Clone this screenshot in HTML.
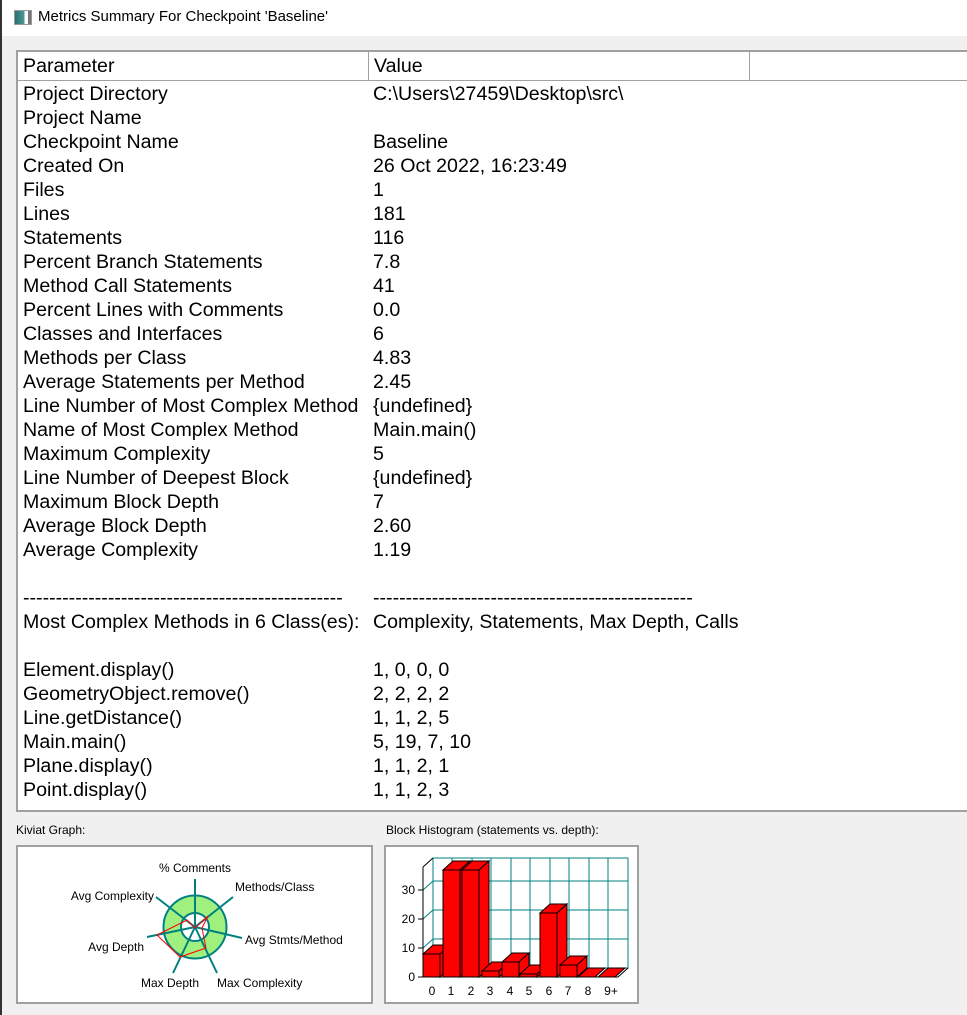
<!DOCTYPE html>
<html><head><style>
body{margin:0;width:967px;height:1015px;background:#f0f0f0;font-family:"Liberation Sans",Arial,sans-serif;position:relative;overflow:hidden}
#title{position:absolute;left:0;top:0;width:967px;height:36px;background:#fff}
#title span{position:absolute;left:38px;top:8px;font-size:15px;color:#000}
#ico{position:absolute;left:14px;top:10px;width:16px;height:13px;border:1px solid #999;background:linear-gradient(90deg,#2a6f6f 0,#4a9a9a 60%,#fff 60%,#fff 80%,#777 80%)}
#leftbar{position:absolute;left:0;top:0;width:2px;height:1015px;background:#333}
#list{position:absolute;left:16px;top:50px;width:960px;height:762px;background:#fff;border:2px solid #a0a0a0;border-right:none;box-sizing:border-box}
#hdr{position:absolute;left:0;top:0;height:28px;width:960px;border-bottom:1px solid #a0a0a0;font-size:19.6px}
.h{position:absolute;top:0;height:28px;line-height:29px;border-right:1px solid #a0a0a0;padding-left:5px;box-sizing:border-box}
#rows{position:absolute;left:5px;top:30px;font-size:19.6px;line-height:24px;white-space:pre}
.c2{position:absolute;left:350px;top:0}
.lbl{position:absolute;font-size:12px;color:#000}
.box{position:absolute;background:#fff;border:2px solid #a0a0a0;box-sizing:border-box}
</style></head><body>
<div id="title"><div id="ico"></div><span>Metrics Summary For Checkpoint 'Baseline'</span></div>
<div id="leftbar"></div>
<div id="list">
<div id="hdr"><div class="h" style="left:0;width:351px">Parameter</div><div class="h" style="left:351px;width:381px">Value</div></div>
<div id="rows"><div>Project Directory
Project Name
Checkpoint Name
Created On
Files
Lines
Statements
Percent Branch Statements
Method Call Statements
Percent Lines with Comments
Classes and Interfaces
Methods per Class
Average Statements per Method
Line Number of Most Complex Method
Name of Most Complex Method
Maximum Complexity
Line Number of Deepest Block
Maximum Block Depth
Average Block Depth
Average Complexity

-------------------------------------------------
Most Complex Methods in 6 Class(es):

Element.display()
GeometryObject.remove()
Line.getDistance()
Main.main()
Plane.display()
Point.display()</div><div class="c2">C:\Users\27459\Desktop\src\

Baseline
26 Oct 2022, 16:23:49
1
181
116
7.8
41
0.0
6
4.83
2.45
{undefined}
Main.main()
5
{undefined}
7
2.60
1.19

-------------------------------------------------
Complexity, Statements, Max Depth, Calls

1, 0, 0, 0
2, 2, 2, 2
1, 1, 2, 5
5, 19, 7, 10
1, 1, 2, 1
1, 1, 2, 3</div></div>
</div>
<div class="lbl" style="left:16px;top:823px">Kiviat Graph:</div>
<div class="lbl" style="left:386px;top:823px">Block Histogram (statements vs. depth):</div>
<div class="box" style="left:16px;top:845px;width:357px;height:159px"></div>
<div class="box" style="left:384px;top:845px;width:255px;height:159px"></div>
<svg style="position:absolute;left:0;top:0" width="967" height="1015" font-family="Liberation Sans, Arial, sans-serif" font-size="12">
<g stroke="#008080" stroke-width="2">
<circle cx="195" cy="927" r="23" fill="none" stroke="#a0f080" stroke-width="17"/>
<circle cx="195" cy="927" r="31.5" fill="none"/>
<circle cx="195" cy="927" r="14" fill="none"/>
<line x1="195" y1="927" x2="195" y2="879"/>
<line x1="195" y1="927" x2="233" y2="897"/>
<line x1="195" y1="927" x2="242" y2="938"/>
<line x1="195" y1="927" x2="217" y2="973"/>
<line x1="195" y1="927" x2="173" y2="973"/>
<line x1="195" y1="927" x2="147" y2="937"/>
<line x1="195" y1="927" x2="156" y2="897"/>
</g>
<polygon points="195,928 208,916 202,928 206,948 180,957 157,935 187,920 195,928" fill="none" stroke="#f00" stroke-width="1"/>
<text x="195" y="872" text-anchor="middle">% Comments</text>
<text x="235" y="891">Methods/Class</text>
<text x="154" y="900" text-anchor="end">Avg Complexity</text>
<text x="245" y="944">Avg Stmts/Method</text>
<text x="144" y="951" text-anchor="end">Avg Depth</text>
<text x="141" y="987">Max Depth</text>
<text x="217" y="987">Max Complexity</text>
<g stroke="#008080" stroke-width="1" fill="none">
<rect x="433" y="858" width="195" height="110"/>
<path d="M452 858V968M472 858V968M491 858V968M511 858V968M530 858V968M550 858V968M569 858V968M589 858V968M608 858V968M433 939H628M433 910H628M433 881H628M423 948L433 939M423 919L433 910M423 890L433 881"/>
</g>
<g stroke="#000" stroke-width="1" fill="none"><path d="M423 867V977H618L628 968M423 867L433 858M418 977H423M418 948H423M418 919H423M418 890H423"/></g>
<g stroke="#000" stroke-width="1" fill="#f00">
<rect x="423" y="954" width="17" height="23"/><polygon points="423,954 433,945 450,945 440,954"/><polygon points="440,954 450,945 450,968 440,977"/>
<rect x="443" y="870" width="17" height="107"/><polygon points="443,870 453,861 470,861 460,870"/><polygon points="460,870 470,861 470,968 460,977"/>
<rect x="462" y="870" width="17" height="107"/><polygon points="462,870 472,861 489,861 479,870"/><polygon points="479,870 489,861 489,968 479,977"/>
<rect x="482" y="971" width="17" height="6"/><polygon points="482,971 492,962 509,962 499,971"/><polygon points="499,971 509,962 509,968 499,977"/>
<rect x="502" y="962" width="17" height="15"/><polygon points="502,962 512,953 529,953 519,962"/><polygon points="519,962 529,953 529,968 519,977"/>
<rect x="520" y="974" width="17" height="3"/><polygon points="520,974 530,965 547,965 537,974"/><polygon points="537,974 547,965 547,968 537,977"/>
<rect x="540" y="913" width="17" height="64"/><polygon points="540,913 550,904 567,904 557,913"/><polygon points="557,913 567,904 567,968 557,977"/>
<rect x="560" y="965" width="17" height="12"/><polygon points="560,965 570,956 587,956 577,965"/><polygon points="577,965 587,956 587,968 577,977"/>
<polygon points="578,977 588,968 605,968 595,977"/>
<polygon points="598,977 608,968 625,968 615,977"/>
</g>
<g text-anchor="end"><text x="415" y="894">30</text><text x="415" y="923">20</text><text x="415" y="952">10</text><text x="415" y="981">0</text></g>
<g text-anchor="middle"><text x="432" y="995">0</text><text x="451" y="995">1</text><text x="471" y="995">2</text><text x="490" y="995">3</text><text x="510" y="995">4</text><text x="529" y="995">5</text><text x="549" y="995">6</text><text x="568" y="995">7</text><text x="588" y="995">8</text><text x="611" y="995">9+</text></g>
</svg>
</body></html>
